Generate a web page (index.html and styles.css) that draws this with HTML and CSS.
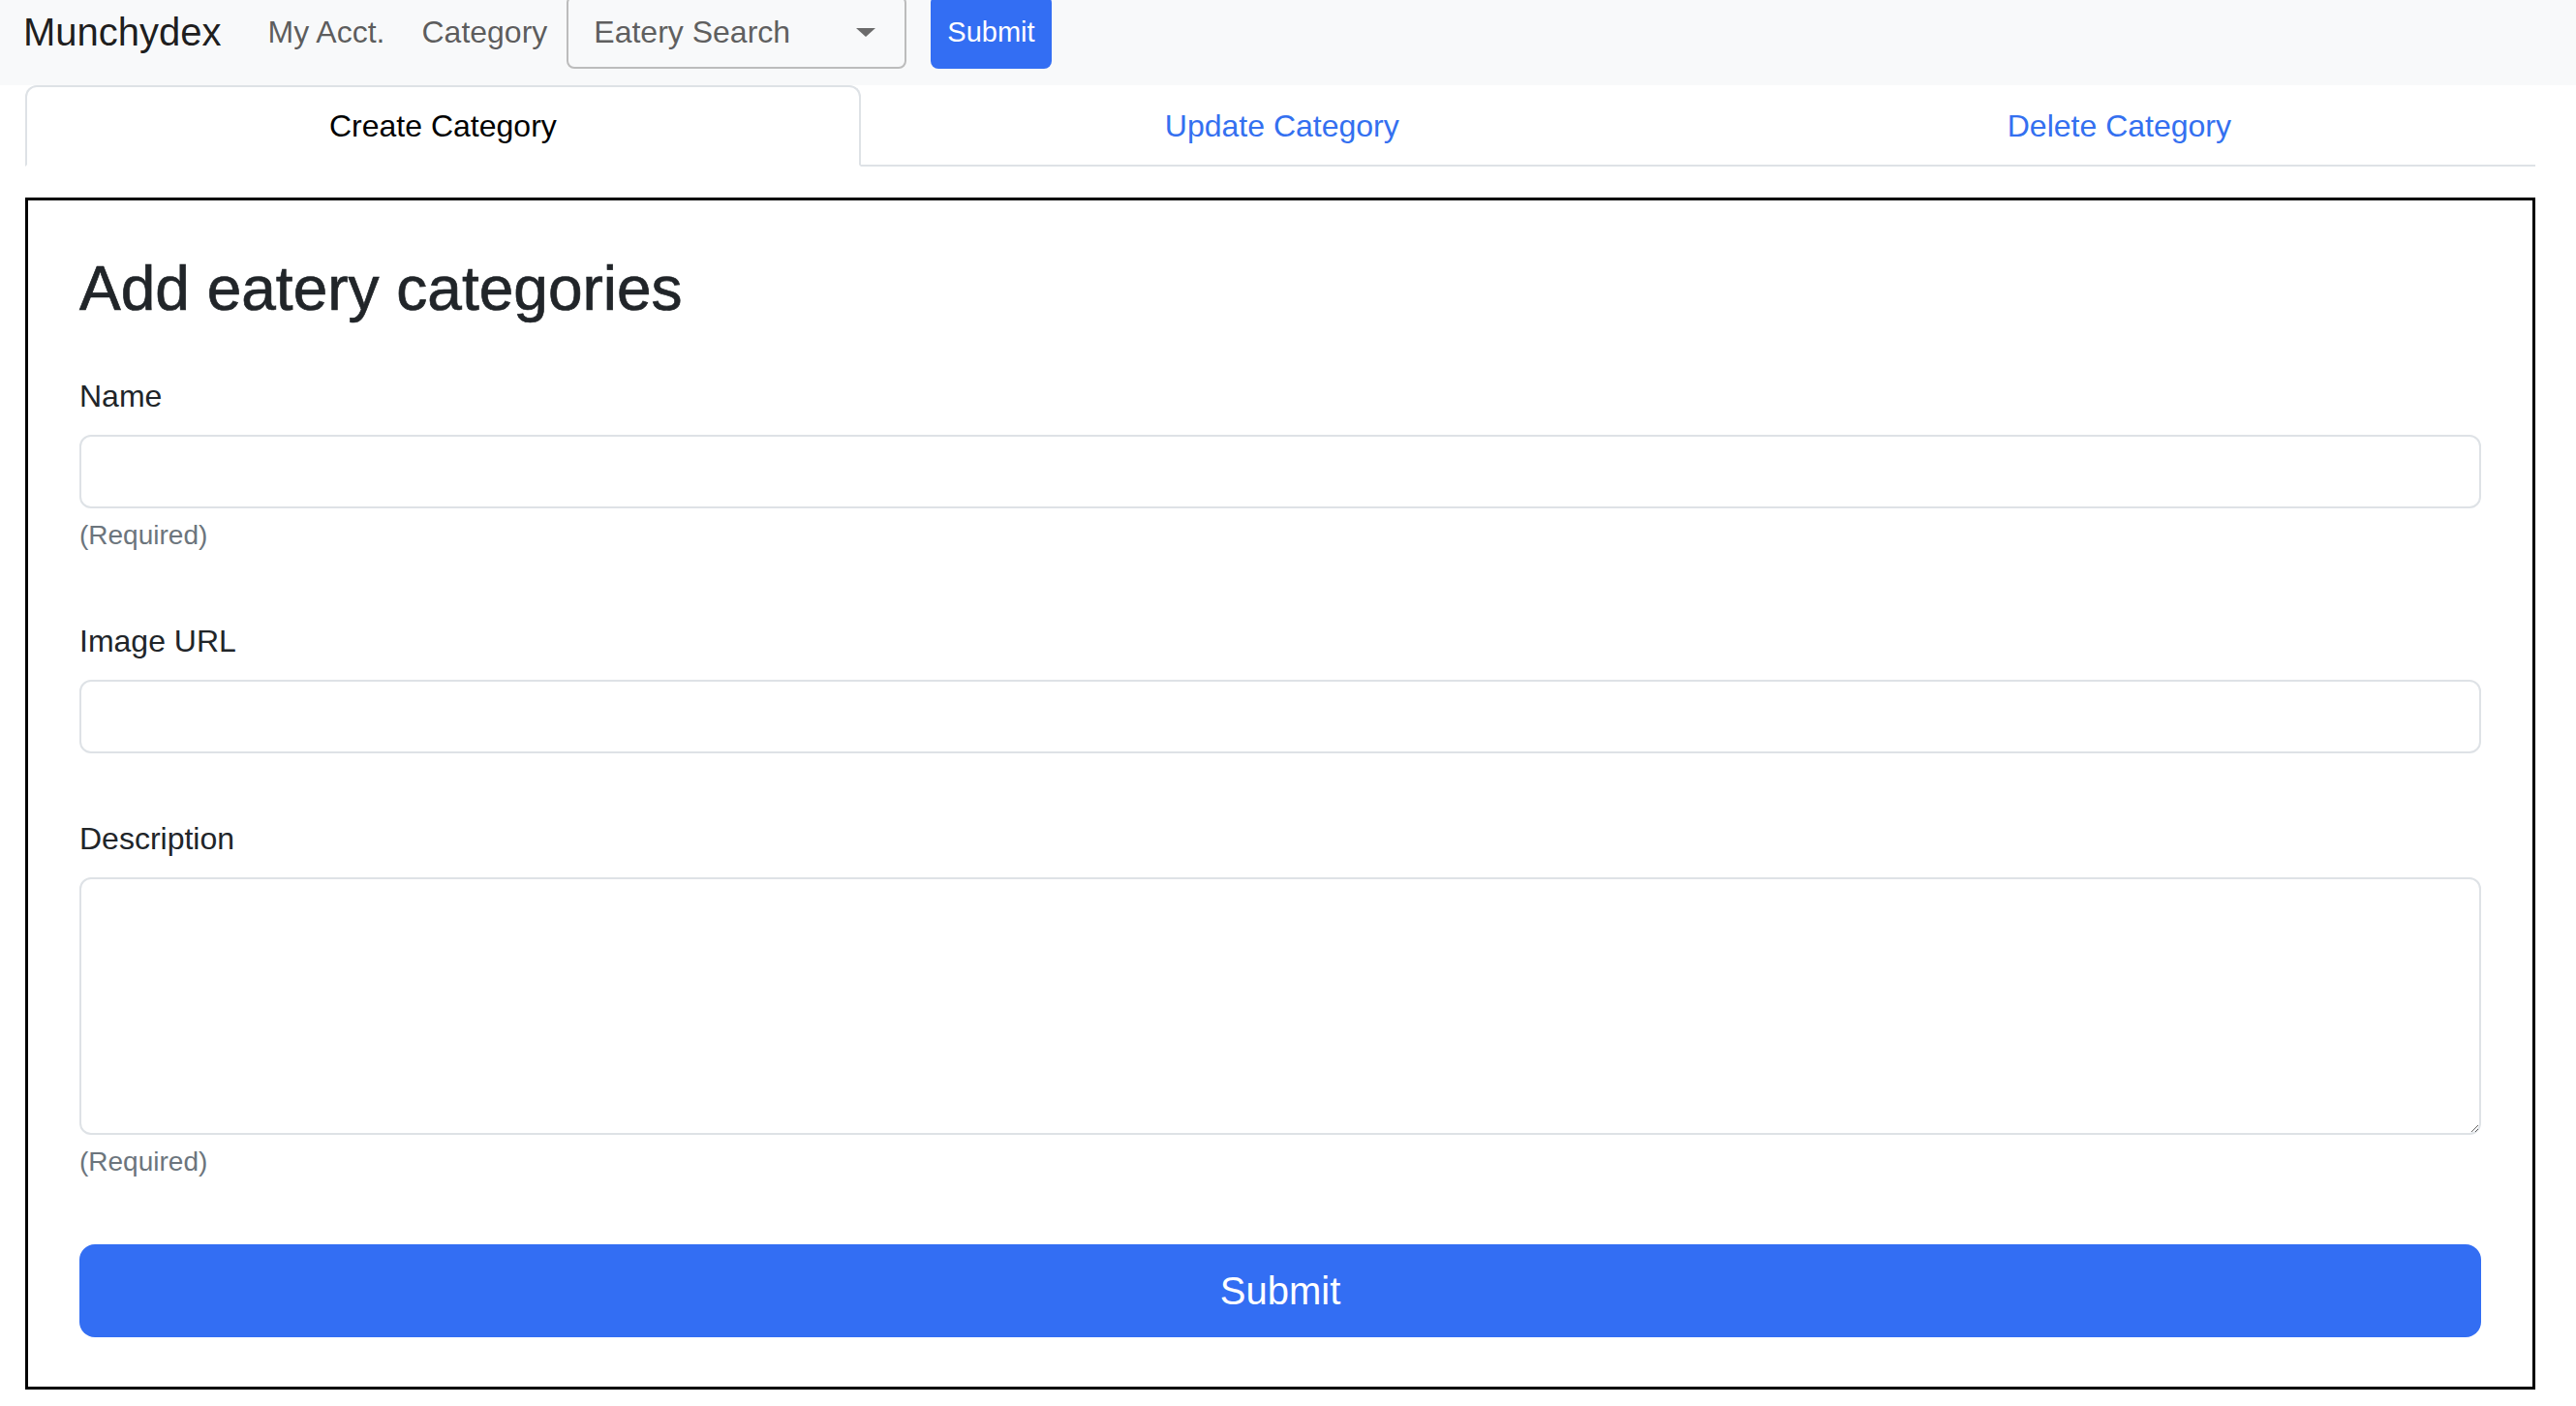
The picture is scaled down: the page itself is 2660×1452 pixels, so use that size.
FILE: index.html
```html
<!DOCTYPE html>
<html lang="en">
<head>
<meta charset="utf-8">
<title>Munchydex - Create Category</title>
<link rel="stylesheet" href="styles.css">
</head>
<body>
<nav class="navbar">
  <div class="navbar-row">
    <a class="brand" href="#">Munchydex</a>
    <a class="nav-link" href="#">My Acct.</a>
    <a class="nav-link" href="#">Category</a>
    <div class="select-box">
      <span class="select-text">Eatery Search</span>
      <svg class="select-caret" width="20" height="9" viewBox="0 0 20 9"><path d="M0 0 H20 L10 9 Z" fill="#6b6b6b"/></svg>
    </div>
    <button class="btn-nav" type="button">Submit</button>
  </div>
</nav>
<main class="page">
  <ul class="tabs">
    <li class="tab-item"><a class="tab-link active" href="#">Create Category</a></li>
    <li class="tab-item"><a class="tab-link" href="#">Update Category</a></li>
    <li class="tab-item"><a class="tab-link" href="#">Delete Category</a></li>
  </ul>
  <section class="card">
    <h2 class="title">Add eatery categories</h2>
    <form class="form">
      <div class="group">
        <label class="label" for="name">Name</label>
        <input class="input" id="name" type="text">
        <div class="help">(Required)</div>
      </div>
      <div class="group">
        <label class="label" for="image">Image URL</label>
        <input class="input" id="image" type="text">
      </div>
      <div class="group">
        <label class="label" for="desc">Description</label>
        <textarea class="textarea" id="desc"></textarea>
        <div class="help">(Required)</div>
      </div>
      <button class="btn-submit" type="button">Submit</button>
    </form>
  </section>
</main>
</body>
</html>
```
FILE: styles.css
```css
* { box-sizing: border-box; }

html, body {
  margin: 0;
  padding: 0;
  background: #ffffff;
}

body {
  font-family: "Liberation Sans", Arial, sans-serif;
  color: #212529;
  font-size: 32px;
  line-height: 1.5;
}

a { text-decoration: none; }

/* Navbar */
.navbar {
  background: #f8f9fa;
  height: 88px;
  padding: 0 0 22px 24px;
}

.navbar-row {
  height: 66px;
  display: flex;
  align-items: center;
}

.brand {
  font-size: 40px;
  line-height: 60px;
  color: rgba(0, 0, 0, 0.9);
  margin-right: 32px;
}

.nav-link {
  font-size: 32px;
  line-height: 48px;
  padding: 0 16px;
  color: rgba(0, 0, 0, 0.65);
}

.nav-link + .nav-link {
  margin-left: 6px;
}

.select-box {
  flex: none;
  width: 351px;
  height: 76px;
  margin-left: 4px;
  border: 2px solid #bcbcbc;
  border-radius: 8px;
  display: flex;
  align-items: center;
  justify-content: space-between;
  padding: 0 30px 0 26px;
}

.select-text {
  font-size: 32px;
  line-height: 48px;
  color: #5f5f5f;
}

.select-caret { display: block; }

.btn-nav {
  flex: none;
  height: 76px;
  margin-left: 25px;
  padding: 0 17px;
  border: none;
  border-radius: 8px;
  background: #336ef3;
  color: #ffffff;
  font-family: "Liberation Sans", Arial, sans-serif;
  font-size: 29px;
  line-height: 44px;
}

/* Page */
.page {
  padding: 0 42px 0 26px;
}

.tabs {
  list-style: none;
  margin: 0;
  padding: 0;
  display: flex;
  border-bottom: 2px solid #dee2e6;
}

.tab-item {
  flex: 1 1 auto;
  text-align: center;
}

.tab-link {
  display: block;
  margin-bottom: -2px;
  padding: 16px 32px;
  font-size: 32px;
  line-height: 48px;
  color: #3470f0;
  border: 2px solid transparent;
  border-top-left-radius: 12px;
  border-top-right-radius: 12px;
}

.tab-link.active {
  color: #000000;
  background: #ffffff;
  border-color: #dee2e6 #dee2e6 #ffffff;
}

.card {
  margin-top: 32px;
  border: 3px solid #000000;
  padding: 53px 53px 51px 53px;
}

.title {
  margin: 0 0 48px 0;
  font-size: 64px;
  line-height: 1.2;
  font-weight: 500;
  color: #212529;
  -webkit-text-stroke: 0.7px #212529;
}

.form { margin: 0; }

.group {
  margin-bottom: 64px;
}

.label {
  display: block;
  font-size: 32px;
  line-height: 48px;
  margin-bottom: 16px;
  color: #212529;
}

.input,
.textarea {
  display: block;
  width: 100%;
  margin: 0;
  border: 2px solid #dee2e6;
  border-radius: 12px;
  background: #ffffff;
  font-family: "Liberation Sans", Arial, sans-serif;
  font-size: 32px;
  padding: 12px 24px;
}

.input { height: 76px; }

.textarea {
  height: 266px;
  resize: vertical;
}

.help {
  margin-top: 7px;
  font-size: 28px;
  line-height: 42px;
  color: #6c757d;
}

.btn-submit {
  display: block;
  width: 100%;
  height: 96px;
  border: none;
  border-radius: 16px;
  background: #336ef3;
  color: #ffffff;
  font-family: "Liberation Sans", Arial, sans-serif;
  font-size: 40px;
  line-height: 60px;
}
```
